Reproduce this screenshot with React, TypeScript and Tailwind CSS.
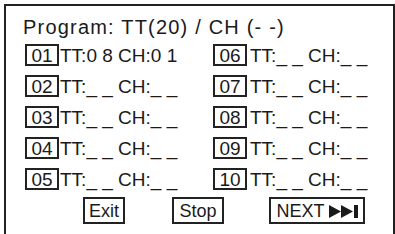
import React from "react";

const left = [
  { n: "01", t: "TT:0 8 CH:0 1" },
  { n: "02", t: "TT:_ _ CH:_ _" },
  { n: "03", t: "TT:_ _ CH:_ _" },
  { n: "04", t: "TT:_ _ CH:_ _" },
  { n: "05", t: "TT:_ _ CH:_ _" },
];
const right = [
  { n: "06", t: "TT:_ _ CH:_ _" },
  { n: "07", t: "TT:_ _ CH:_ _" },
  { n: "08", t: "TT:_ _ CH:_ _" },
  { n: "09", t: "TT:_ _ CH:_ _" },
  { n: "10", t: "TT:_ _ CH:_ _" },
];

function Row({ n, t, gap }: { n: string; t: string; gap: string }) {
  return (
    <div className="flex items-center h-[22px]">
      <div className="w-[34px] h-[22px] border-2 border-[#222] flex items-center justify-center text-[19px] leading-[19px]">
        {n}
      </div>
      <div className={`${gap} text-[19px] leading-[19px] whitespace-pre`}>{t}</div>
    </div>
  );
}

export default function App() {
  return (
    <div className="w-[395px] h-[234px] overflow-hidden bg-white text-[#1a1a1a] pl-[4px] pt-[4px] [font-family:'Liberation_Sans',Arial,sans-serif]">
      <div className="w-[391px] h-[240px] border-2 border-[#222] flex flex-col">
        <div className="pl-[17px] pt-[11px] text-[20px] leading-[20px] tracking-[1.2px] whitespace-pre">
          Program: TT(20) / CH (- -)
        </div>
        <div className="pl-[19px] mt-[7px] grid grid-cols-[188px_188px]">
          <div className="flex flex-col gap-[9px]">
            {left.map((r) => (
              <Row key={r.n} n={r.n} t={r.t} gap="ml-[1px]" />
            ))}
          </div>
          <div className="flex flex-col gap-[9px]">
            {right.map((r) => (
              <Row key={r.n} n={r.n} t={r.t} gap="ml-[3px]" />
            ))}
          </div>
        </div>
        <div className="flex mt-[7px] pl-[77px]">
          <div className="w-[42px] h-[27px] border-2 border-[#222] flex items-center justify-center text-[18px] leading-[18px]">
            Exit
          </div>
          <div className="ml-[47px] w-[52px] h-[27px] border-2 border-[#222] flex items-center justify-center text-[18px] leading-[18px]">
            Stop
          </div>
          <div className="ml-[45px] w-[96px] h-[27px] border-2 border-[#222] flex items-center justify-center gap-[4px] text-[18px] leading-[18px]">
            <span>NEXT</span>
            <svg width="29" height="13" viewBox="0 0 29 13" className="mt-[1px]">
              <polygon points="0,0 12,6.5 0,13" fill="#1a1a1a" />
              <polygon points="12,0 24,6.5 12,13" fill="#1a1a1a" />
              <rect x="25" y="0" width="4" height="13" fill="#1a1a1a" />
            </svg>
          </div>
        </div>
      </div>
    </div>
  );
}
